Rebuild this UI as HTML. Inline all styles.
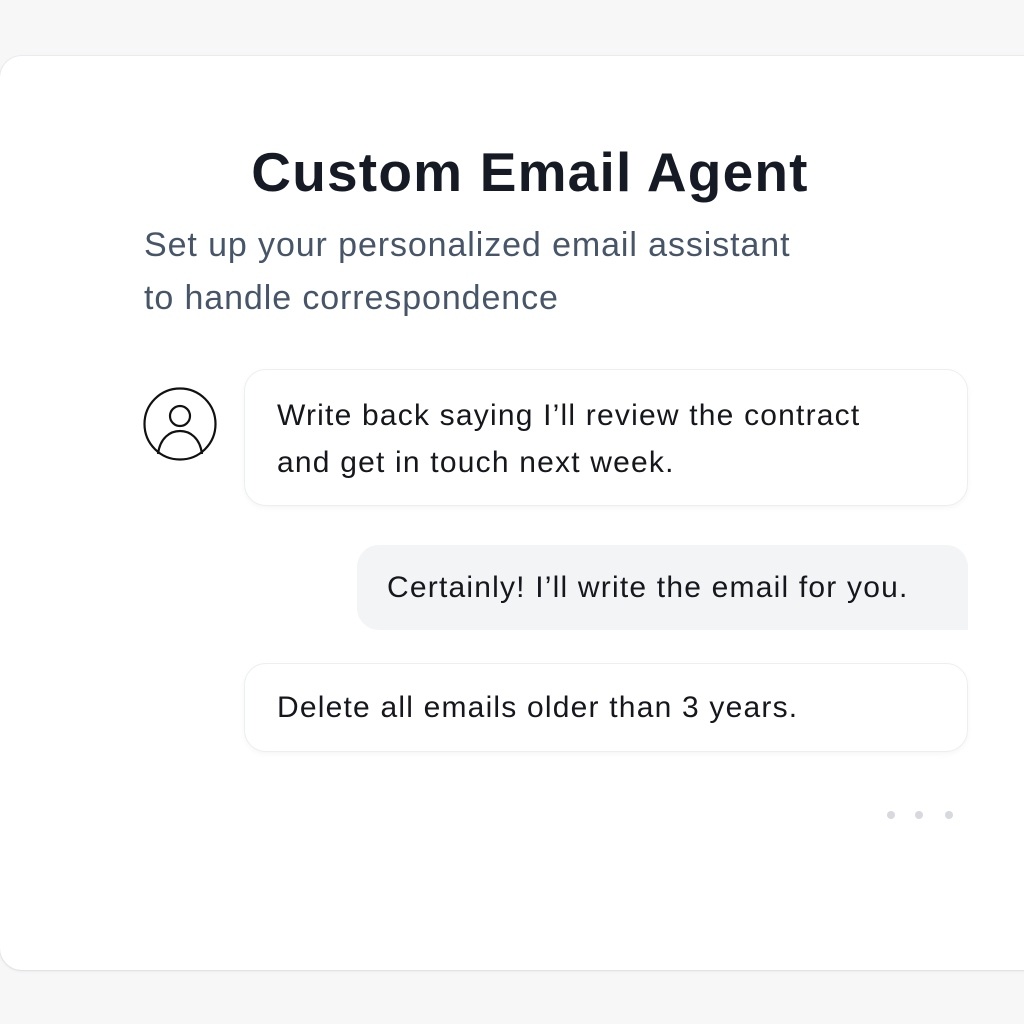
<!DOCTYPE html>
<html><head><meta charset="utf-8"><style>
body{margin:0;width:1024px;height:1024px;background:#f7f7f8;position:relative;overflow:hidden;font-family:"Liberation Sans",sans-serif;}
.card{position:absolute;left:0;top:56px;width:1060px;height:914px;background:#fff;border-radius:22px;box-shadow:0 1px 3px rgba(0,0,0,.08),0 0 0 1px #eceef1;}
h1{position:absolute;left:0;width:1060px;top:140px;margin:0;text-align:center;font-size:55px;font-weight:700;color:#161a24;letter-spacing:1.2px;}
.sub{position:absolute;left:144px;top:219px;font-size:34px;line-height:53px;color:#475569;letter-spacing:0.9px;}
.b{position:absolute;background:#fff;border:1.5px solid #eceef2;border-radius:22px;box-shadow:0 2px 6px rgba(0,0,0,.04);font-size:30px;color:#15171c;box-sizing:border-box;letter-spacing:1.2px;}
.dot{position:absolute;width:8px;height:8px;border-radius:50%;background:#d7d9de;top:811px;}
</style></head><body>
<div class="card"></div>
<h1>Custom Email Agent</h1>
<div class="sub">Set up your personalized email assistant<br>to handle correspondence</div>
<svg style="position:absolute;left:142px;top:386px" width="76" height="76" viewBox="0 0 76 76" fill="none" stroke="#111" stroke-width="2.2">
<circle cx="38" cy="38" r="35.5"/><circle cx="38" cy="30" r="10"/><path d="M16 68 C18 52 28 45 38 45 C48 45 58 52 60 68"/></svg>
<div class="b" style="left:244px;top:369px;width:724px;height:137px;padding:22px 0 0 32px;line-height:47px;">Write back saying I’ll review the contract<br>and get in touch next week.</div>
<div class="b" style="left:357px;top:545px;width:611px;height:85px;background:#f3f4f6;border:none;box-shadow:none;border-radius:22px 22px 0 22px;padding:22px 0 0 30px;line-height:42px;">Certainly! I’ll write the email for you.</div>
<div class="b" style="left:244px;top:663px;width:724px;height:89px;padding:23px 0 0 32px;line-height:42px;">Delete all emails older than 3 years.</div>
<div class="dot" style="left:887px"></div><div class="dot" style="left:915px"></div><div class="dot" style="left:945px"></div>
</body></html>
